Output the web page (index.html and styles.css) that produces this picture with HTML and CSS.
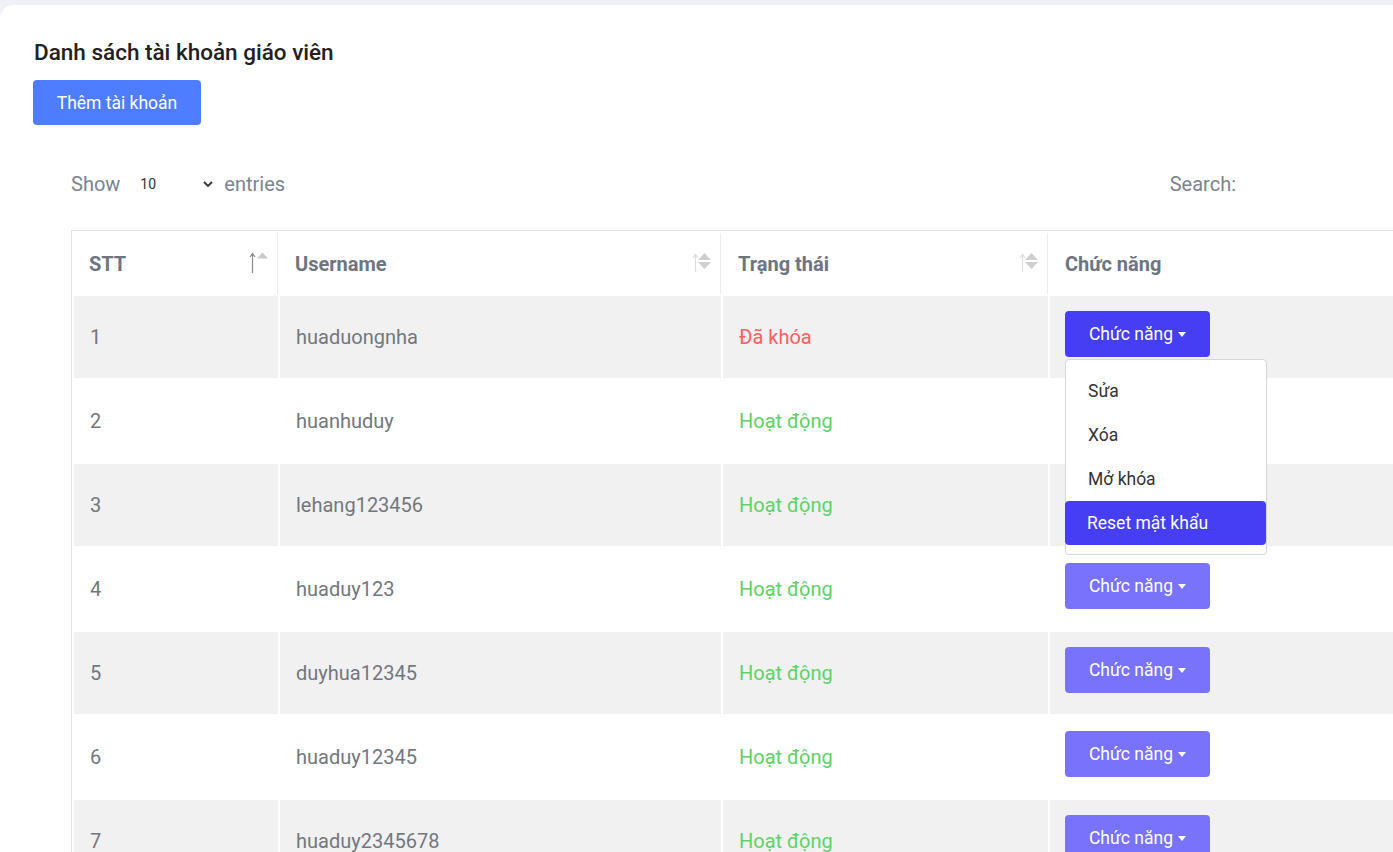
FILE: index.html
```html
<!DOCTYPE html>
<html lang="vi">
<head>
<meta charset="utf-8">
<title>Danh sách tài khoản giáo viên</title>
<link rel="stylesheet" href="styles.css">
</head>
<body>
<div class="page">
  <div class="card">
    <h1 class="title">Danh sách tài khoản giáo viên</h1>
    <button class="btn-add">Thêm tài khoản</button>

    <div class="dt">
      <div class="dt-controls">
        <div class="dt-length">
          <span>Show</span>
          <span class="dt-select">10
            <svg class="chev" width="10" height="7" viewBox="0 0 10 7"><path d="M1 1l4 4 4-4" fill="none" stroke="#333" stroke-width="1.8"/></svg>
          </span>
          <span>entries</span>
        </div>
        <div class="dt-search">
          <span>Search:</span>
        </div>
      </div>

      <table class="tbl">
        <colgroup>
          <col class="c1"><col class="c2"><col class="c3"><col class="c4">
        </colgroup>
        <thead>
          <tr>
            <th><div class="th-in"><span>STT</span>
              <svg width="20" height="24" viewBox="0 0 20 24"><path d="M3.5 23V4M1 7l2.5-3.5L6 7" fill="none" stroke="#8a8a8a" stroke-width="1.2"/><path d="M8 8.5l5.5-6 5.5 6z" fill="#c9c9c9"/></svg>
            </div></th>
            <th><div class="th-in"><span>Username</span>
              <svg width="20" height="24" viewBox="0 0 20 24"><path d="M3.5 22V5M1 8l2.5-3.5L6 8" fill="none" stroke="#dcdcdc" stroke-width="1.2"/><path d="M6 10l6.5-7 6.5 7zM6 12h13l-6.5 7z" fill="#cfcfcf"/></svg>
            </div></th>
            <th><div class="th-in"><span>Trạng thái</span>
              <svg width="20" height="24" viewBox="0 0 20 24"><path d="M3.5 22V5M1 8l2.5-3.5L6 8" fill="none" stroke="#dcdcdc" stroke-width="1.2"/><path d="M6 10l6.5-7 6.5 7zM6 12h13l-6.5 7z" fill="#cfcfcf"/></svg>
            </div></th>
            <th><div class="th-in"><span>Chức năng</span></div></th>
          </tr>
        </thead>
        <tbody>
          <tr class="odd">
            <td>1</td><td>huaduongnha</td><td class="locked">Đã khóa</td>
            <td class="act">
              <div class="dd">
                <button class="btn-fn dark">Chức năng <i class="caret"></i></button>
                <ul class="menu">
                  <li>Sửa</li>
                  <li>Xóa</li>
                  <li>Mở khóa</li>
                  <li class="active">Reset mật khẩu</li>
                </ul>
              </div>
            </td>
          </tr>
          <tr>
            <td>2</td><td>huanhuduy</td><td class="ok">Hoạt động</td>
            <td class="act"><button class="btn-fn dark">Chức năng <i class="caret"></i></button></td>
          </tr>
          <tr class="odd">
            <td>3</td><td>lehang123456</td><td class="ok">Hoạt động</td>
            <td class="act"><button class="btn-fn dark">Chức năng <i class="caret"></i></button></td>
          </tr>
          <tr>
            <td>4</td><td>huaduy123</td><td class="ok">Hoạt động</td>
            <td class="act"><button class="btn-fn">Chức năng <i class="caret"></i></button></td>
          </tr>
          <tr class="odd">
            <td>5</td><td>duyhua12345</td><td class="ok">Hoạt động</td>
            <td class="act"><button class="btn-fn">Chức năng <i class="caret"></i></button></td>
          </tr>
          <tr>
            <td>6</td><td>huaduy12345</td><td class="ok">Hoạt động</td>
            <td class="act"><button class="btn-fn">Chức năng <i class="caret"></i></button></td>
          </tr>
          <tr class="odd">
            <td>7</td><td>huaduy2345678</td><td class="ok">Hoạt động</td>
            <td class="act"><button class="btn-fn">Chức năng <i class="caret"></i></button></td>
          </tr>
        </tbody>
      </table>
    </div>
  </div>
</div>
</body>
</html>
```

FILE: styles.css
```css
html, body {
  margin: 0;
  padding: 0;
  overflow: hidden;
  height: 852px;
}
body {
  background: #f0f0f7;
  font-family: Roboto, "Liberation Sans", Arial, sans-serif;
}
.page {
  padding-top: 5px;
}
.card {
  background: #fff;
  border-radius: 14px 0 0 0;
  padding: 35px 0 0 33px;
  width: 1500px;
  min-height: 900px;
  box-sizing: border-box;
}
.title {
  margin: 0 0 0 1px;
  font-size: 22.5px;
  font-weight: 500;
  line-height: 24px;
  color: #212121;
}
.btn-add {
  margin-top: 16px;
  height: 45px;
  width: 168px;
  border: none;
  border-radius: 4px;
  background: #4f7dff;
  color: #fff;
  font-family: inherit;
  font-size: 17.5px;
  padding: 0;
}
.dt {
  padding-left: 38px;
}
.dt-controls {
  margin-top: 39px;
  height: 40px;
  display: flex;
  align-items: center;
  width: 1165px;
  justify-content: space-between;
  font-size: 20px;
  color: #7a8491;
}
.dt-length {
  display: flex;
  align-items: center;
}
.dt-select {
  display: inline-flex;
  align-items: center;
  margin-left: 20px;
  width: 73px;
  font-size: 14px;
  color: #333;
  justify-content: space-between;
}
.dt-length > span:last-child {
  margin-left: 11px;
}
.dt-search {
  display: flex;
  align-items: center;
}
.tbl {
  margin-top: 26px;
  border: 1px solid #e2e2e2;
  border-right: none;
  border-spacing: 2px;
  table-layout: fixed;
  width: 1430px;
  font-size: 20px;
}
.c1 { width: 204px; }
.c2 { width: 441px; }
.c3 { width: 325px; }
.c4 { width: 450px; }
.tbl th {
  height: 61px;
  padding: 0 0 0 15px;
  text-align: left;
  font-weight: 700;
  color: #6d7582;
  border-right: 1px solid #ececec;
  box-sizing: border-box;
}
.tbl th:last-child {
  border-right: none;
}
.th-in {
  display: flex;
  align-items: center;
  justify-content: space-between;
  padding-right: 8px;
}
.th-in svg {
  margin-top: -3px;
}
.tbl td {
  height: 82px;
  padding: 0 0 0 16px;
  color: #72777f;
  vertical-align: middle;
  box-sizing: border-box;
}
.tbl tr.odd td {
  background: #f1f1f1;
}
.tbl td.locked { color: #ff5e5e; }
.tbl td.ok { color: #5fd167; }
.tbl td.act {
  vertical-align: top;
  padding: 15px 0 0 15px;
}
.dd {
  position: relative;
  display: inline-block;
}
.btn-fn {
  width: 145px;
  height: 46px;
  border: none;
  border-radius: 4px;
  background: #7873fa;
  color: #fff;
  font-family: inherit;
  font-size: 17.5px;
  padding: 0;
  display: flex;
  align-items: center;
  justify-content: center;
  gap: 5px;
}
.btn-fn.dark {
  background: #463ef5;
}
.caret {
  display: inline-block;
  width: 0;
  height: 0;
  border-left: 4.5px solid transparent;
  border-right: 4.5px solid transparent;
  border-top: 5px solid #fff;
  margin-top: 1px;
}
.menu {
  position: absolute;
  top: 48px;
  left: 0;
  z-index: 5;
  width: 202px;
  box-sizing: border-box;
  margin: 0;
  padding: 9px 0;
  list-style: none;
  background: #fff;
  border: 1px solid #d6d6d6;
  border-radius: 4px;
}
.menu li {
  height: 44px;
  line-height: 44px;
  padding-left: 22px;
  font-size: 17.5px;
  color: #333;
}
.menu li.active {
  background: #463ef5;
  color: #fff;
  border-radius: 4px;
  margin-left: -1px;
}
```
